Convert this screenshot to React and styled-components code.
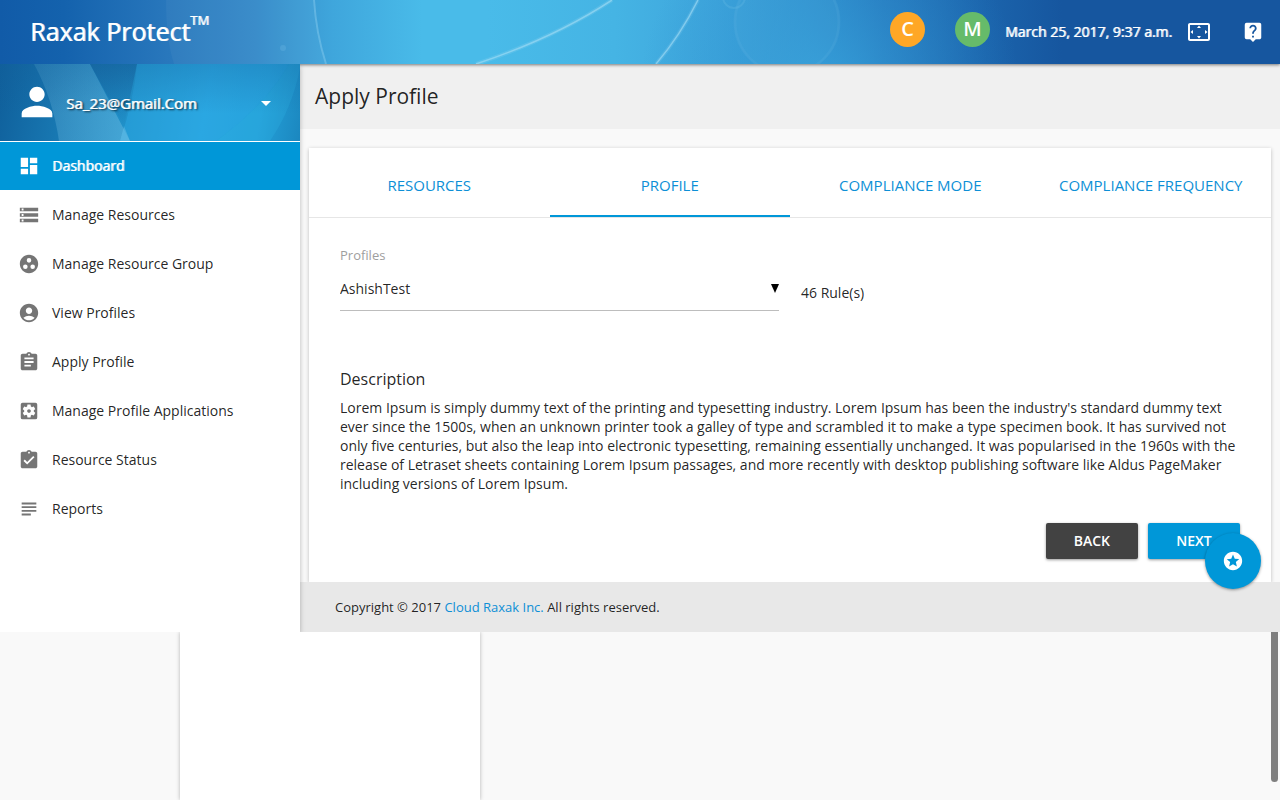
import React from 'react';
import styled, { createGlobalStyle, css } from 'styled-components';
import {
  MdDashboard, MdStorage, MdGroupWork, MdAccountCircle, MdAssignment,
  MdSettingsApplications, MdAssignmentTurnedIn, MdSubject, MdPerson,
  MdArrowDropDown, MdSettingsOverscan, MdLiveHelp, MdStars,
} from 'react-icons/md';

const blue = '#0097d8';
const shadow = '0 1px 3px rgba(0,0,0,.4)';
const strong = '1px 0 0 rgba(255,255,255,.8)';

const GlobalStyle = createGlobalStyle`
  *, *::before, *::after { box-sizing: border-box; }
  body {
    margin: 0;
    background: #f9f9f9;
    color: rgba(0,0,0,.87);
    font: 14px/20px "Open Sans", "Noto Sans", sans-serif;
  }
  h1, h2, p { margin: 0; font-weight: 400; }
  button, select { font: inherit; }
  a { text-decoration: none; }
`;

const Page = styled.div`
  display: flex;
  flex-direction: column;
  min-height: 100vh;
  overflow-x: hidden;
`;

const Header = styled.header`
  position: relative;
  z-index: 3;
  display: flex;
  align-items: center;
  justify-content: space-between;
  height: 64px;
  padding: 0 16px 0 30px;
  color: #fff;
  background: linear-gradient(90deg, #115ba8 0, #1462ad 5%, #2877bc 13%, #3389c8 20%, #3fa6dc 26%, #49bbe9 33%, #49bbe9 38%, #45b4e4 48%, #3ea5dc 56%, #3192d0 63%, #2678bd 69%, #1b64ac 77%, #16569f 83%, #16569f 100%);
  box-shadow: 0 1px 3px rgba(0,0,0,.5);
`;

const Decoration = styled.svg`
  position: absolute;
  inset: 0;
  width: 100%;
  height: 100%;
`;

const Brand = styled.a`
  position: relative;
  display: flex;
  padding-bottom: 2px;
  color: #fff;
  font-size: 25px;
  line-height: 34px;
  text-shadow: ${strong};
`;

const Trademark = styled.sup`
  font-size: 13px;
  line-height: 12px;
  vertical-align: top;
`;

const HeaderTools = styled.div`
  position: relative;
  display: flex;
  align-items: center;
  text-shadow: ${strong};
`;

const Avatar = styled.button`
  width: 35px;
  height: 35px;
  margin: 0 30px 5px 0;
  padding: 0 0 2px;
  border: 0;
  border-radius: 50%;
  background: ${({ $color }) => $color};
  color: #fff;
  font-size: 20px;
  line-height: 32px;
  font-weight: 600;
  &:nth-of-type(2) { margin-right: 15px; }
`;

const IconButton = styled.button`
  display: flex;
  margin-left: ${({ $gap }) => $gap}px;
  padding: 0;
  border: 0;
  background: none;
  color: #fff;
  font-size: ${({ $size }) => $size}px;
`;

const Body = styled.div`
  display: flex;
`;

const Sidebar = styled.aside`
  position: relative;
  z-index: 4;
  flex: 0 0 300px;
  background: #fff;
  box-shadow: 0 2px 5px rgba(0,0,0,.26);
  clip-path: inset(0 -8px 0 0);
`;

const UserPanel = styled.div`
  position: relative;
  display: flex;
  align-items: center;
  height: 77px;
  padding: 0 22px 2px 18px;
  color: #fff;
  background: linear-gradient(100deg, #0f5f9b 0, #1878b2 22%, #2193cb 45%, #29a5df 68%, #249fd8 86%, #1b87bf 100%);
`;

const UserIcon = styled(MdPerson)`
  position: relative;
  flex: none;
  width: 46px;
  height: 46px;
  margin-left: -4px;
`;

const UserMenu = styled.button`
  position: relative;
  flex: 1;
  display: flex;
  align-items: center;
  justify-content: space-between;
  padding: 2px 0 0 6px;
  border: 0;
  background: none;
  color: #fff;
  font-size: 15px;
  text-shadow: ${strong}, 2px 1px 2px rgba(0,0,0,.8);
  svg { width: 24px; height: 24px; }
`;

const Nav = styled.nav`
  padding-top: 1px;
`;

const NavLink = styled.a`
  display: flex;
  align-items: center;
  gap: 12px;
  height: 48px;
  margin-bottom: 1px;
  padding: 0 18px;
  color: rgba(0,0,0,.87);
  svg { width: 22px; height: 22px; color: #757575; }
  ${({ $active }) => $active && css`
    background: ${blue};
    color: #fff;
    text-shadow: ${strong};
    svg { color: #fff; }
  `}
`;

const Main = styled.div`
  flex: 1;
  min-width: 0;
  display: flex;
  flex-direction: column;
`;

const TitleBar = styled.div`
  height: 65px;
  padding: 16px 15px;
  background: #f0f0f0;
`;

const Title = styled.h1`
  font-size: 21px;
  line-height: 32px;
`;

const Card = styled.main`
  margin: 19px 9px 0;
  background: #fff;
  box-shadow: 0 1px 4px rgba(0,0,0,.24);
`;

const Tabs = styled.div`
  display: grid;
  grid-template-columns: repeat(4, 1fr);
  height: 70px;
  border-bottom: 1px solid #e6e6e6;
`;

const Tab = styled.button`
  padding: 6px 0 0;
  border: 0;
  border-bottom: 2px solid ${({ $active }) => ($active ? blue : 'transparent')};
  background: none;
  color: #0d8fd6;
  font-size: 15px;
  white-space: nowrap;
`;

const Form = styled.form`
  padding: 27px 20px 23px;
`;

const Columns = styled.div`
  display: grid;
  grid-template-columns: 1fr 1fr;
`;

const Column = styled.div`
  padding: 0 11px;
`;

const Label = styled.label`
  display: block;
  color: #9e9e9e;
  font-size: 13px;
  line-height: 20px;
`;

const SelectBox = styled.div`
  position: relative;
  border-bottom: 1px solid #bdbdbd;
`;

const Select = styled.select`
  display: block;
  appearance: none;
  width: 100%;
  height: 45px;
  padding: 2px 0 0;
  border: 0;
  background: none;
  color: rgba(0,0,0,.87);
`;

const Caret = styled.svg`
  position: absolute;
  top: 19px;
  right: 0;
  width: 8px;
  height: 9px;
  pointer-events: none;
`;

const RuleCount = styled.p`
  padding-top: 38px;
`;

const Description = styled.section`
  padding: 58px 11px 0;
`;

const Heading = styled.h2`
  font-size: 16px;
  line-height: 20px;
  margin-bottom: 9px;
`;

const Copy = styled.p`
  line-height: 19px;
`;

const Actions = styled.div`
  display: flex;
  justify-content: flex-end;
  gap: 10px;
  padding: 30px 11px 0;
`;

const ActionButton = styled.button`
  min-width: 92px;
  height: 36px;
  padding: 0 28px;
  border: 0;
  border-radius: 2px;
  background: ${({ $color }) => $color};
  color: #fff;
  font-weight: 600;
  box-shadow: ${shadow};
`;

const Footer = styled.footer`
  position: relative;
  display: flex;
  align-items: center;
  height: 50px;
  margin-top: auto;
  padding: 0 35px;
  background: #e8e8e8;
  font-size: 13px;
  a { color: #0d8fd6; }
`;

const FloatingButton = styled.button`
  position: absolute;
  right: 19px;
  bottom: 43px;
  z-index: 2;
  display: grid;
  place-items: center;
  width: 56px;
  height: 56px;
  padding: 0;
  border: 0;
  border-radius: 50%;
  background: ${blue};
  color: #fff;
  font-size: 22px;
  box-shadow: ${shadow};
`;

const Lower = styled.div`
  flex: 1;
  display: flex;
  justify-content: space-between;
  min-height: 168px;
  padding: 0 2px 0 180px;
  overflow: hidden;
`;

const Drawer = styled.div`
  width: 300px;
  background: #fff;
  box-shadow: 0 0 4px rgba(0,0,0,.28);
`;

const ScrollThumb = styled.div`
  width: 7px;
  height: 150px;
  border-radius: 0 0 4px 4px;
  background: #7f7f7f;
`;

const navItems = [
  ['Dashboard', MdDashboard],
  ['Manage Resources', MdStorage],
  ['Manage Resource Group', MdGroupWork],
  ['View Profiles', MdAccountCircle],
  ['Apply Profile', MdAssignment],
  ['Manage Profile Applications', MdSettingsApplications],
  ['Resource Status', MdAssignmentTurnedIn],
  ['Reports', MdSubject],
];

const tabs = ['RESOURCES', 'PROFILE', 'COMPLIANCE MODE', 'COMPLIANCE FREQUENCY'];

function HeaderArt() {
  return (
    <Decoration viewBox="0 0 1280 64" preserveAspectRatio="none" aria-hidden="true">
      <defs>
        <radialGradient id="glow" cx="830" cy="90" r="190" gradientUnits="userSpaceOnUse">
          <stop offset="0" stopColor="#38a5dd" stopOpacity=".75" />
          <stop offset="1" stopColor="#2b8ccc" stopOpacity="0" />
        </radialGradient>
      </defs>
      <rect width="1280" height="64" fill="url(#glow)" />
      <path d="M166 0Q166 40 174 64H325Q314 30 313 0Z" fill="#fff" opacity=".04" />
      <g fill="none" stroke="#a5def5">
        <path d="M314 0Q316 33 326 64" strokeWidth="2" opacity=".35" />
        <path d="M476 64C530 46 574 25 612 0" strokeWidth="4" opacity=".18" />
        <path d="M476 64C530 46 574 25 612 0" strokeWidth="1.5" opacity=".6" />
        <path d="M656 64Q680 36 698 0" strokeWidth="4" opacity=".15" />
        <path d="M656 64Q680 36 698 0" strokeWidth="1.5" opacity=".6" />
      </g>
      <circle cx="787" cy="22" r="53" fill="#5fb6e6" opacity=".1" />
      <circle cx="787" cy="22" r="52" fill="none" stroke="#7dc8ec" strokeWidth="3" opacity=".1" />
      <circle cx="734" cy="-3" r="11" fill="none" stroke="#7dc8ec" strokeWidth="2" opacity=".2" />
      <circle cx="283" cy="48" r="3" fill="#8ecdf0" opacity=".2" />
    </Decoration>
  );
}

function UserArt() {
  return (
    <Decoration viewBox="0 0 300 77" preserveAspectRatio="none" aria-hidden="true">
      <defs>
        <linearGradient id="shade" x1="0" y1="0" x2="0" y2="1">
          <stop offset="0" stopColor="#145f9a" stopOpacity=".6" />
          <stop offset="1" stopColor="#145f9a" stopOpacity="0" />
        </linearGradient>
        <linearGradient id="band" x1="0" y1="0" x2="1" y2="0">
          <stop offset="0" stopColor="#7cc4e6" stopOpacity=".22" />
          <stop offset="1" stopColor="#7cc4e6" stopOpacity=".4" />
        </linearGradient>
      </defs>
      <path d="M34 0Q53 35 59 77H130L90 0Z" fill="url(#band)" />
      <path d="M90 0H137L124 62Z" fill="url(#shade)" />
      <path d="M137 0Q134 35 120 77H216Q265 42 289 0Z" fill="#2cabe6" opacity=".4" />
      <path d="M124 62L130 77H120Z" fill="#8bd0ee" opacity=".3" />
      <path d="M216 77H270Q292 45 300 4V0H289Q265 42 216 77Z" fill="#30b7e7" opacity=".25" />
      <rect width="300" height="50" fill="url(#shade)" opacity=".5" />
    </Decoration>
  );
}

export default function App() {
  return (
    <Page>
      <GlobalStyle />
      <Header>
        <HeaderArt />
        <Brand href="#">Raxak Protect<Trademark>TM</Trademark></Brand>
        <HeaderTools>
          <Avatar $color="#ffa726">C</Avatar>
          <Avatar $color="#66bb6a">M</Avatar>
          <time dateTime="2017-03-25T09:37">March 25, 2017, 9:37 a.m.</time>
          <IconButton $gap={15} $size={24} aria-label="Full screen"><MdSettingsOverscan /></IconButton>
          <IconButton $gap={31} $size={22} aria-label="Help"><MdLiveHelp /></IconButton>
        </HeaderTools>
      </Header>
      <Body>
        <Sidebar>
          <UserPanel>
            <UserArt />
            <UserIcon />
            <UserMenu>Sa_23@Gmail.Com<MdArrowDropDown /></UserMenu>
          </UserPanel>
          <Nav>
            {navItems.map(([name, Icon], i) => (
              <NavLink key={name} href="#" $active={i === 0}><Icon />{name}</NavLink>
            ))}
          </Nav>
        </Sidebar>
        <Main>
          <TitleBar><Title>Apply Profile</Title></TitleBar>
          <Card>
            <Tabs role="tablist">
              {tabs.map((name, i) => (
                <Tab key={name} role="tab" aria-selected={i === 1} $active={i === 1}>{name}</Tab>
              ))}
            </Tabs>
            <Form onSubmit={(e) => e.preventDefault()}>
              <Columns>
                <Column>
                  <Label htmlFor="profiles">Profiles</Label>
                  <SelectBox>
                    <Select id="profiles"><option>AshishTest</option></Select>
                    <Caret viewBox="0 0 8 9" aria-hidden="true"><path d="M0 0H8L4 9Z" /></Caret>
                  </SelectBox>
                </Column>
                <Column><RuleCount>46 Rule(s)</RuleCount></Column>
              </Columns>
              <Description>
                <Heading>Description</Heading>
                <Copy>
                  Lorem Ipsum is simply dummy text of the printing and typesetting industry. Lorem Ipsum has been the industry's standard dummy text ever since the 1500s, when an unknown printer took a galley of type and scrambled it to make a type specimen book. It has survived not only five centuries, but also the leap into electronic typesetting, remaining essentially unchanged. It was popularised in the 1960s with the release of Letraset sheets containing Lorem Ipsum passages, and more recently with desktop publishing software like Aldus PageMaker including versions of Lorem Ipsum.
                </Copy>
              </Description>
              <Actions>
                <ActionButton type="button" $color="#424242">BACK</ActionButton>
                <ActionButton type="submit" $color={blue}>NEXT</ActionButton>
              </Actions>
            </Form>
          </Card>
          <Footer>
            <span>Copyright © 2017 <a href="#">Cloud Raxak Inc.</a> All rights reserved.</span>
            <FloatingButton aria-label="Favourites"><MdStars /></FloatingButton>
          </Footer>
        </Main>
      </Body>
      <Lower>
        <Drawer />
        <ScrollThumb />
      </Lower>
    </Page>
  );
}
